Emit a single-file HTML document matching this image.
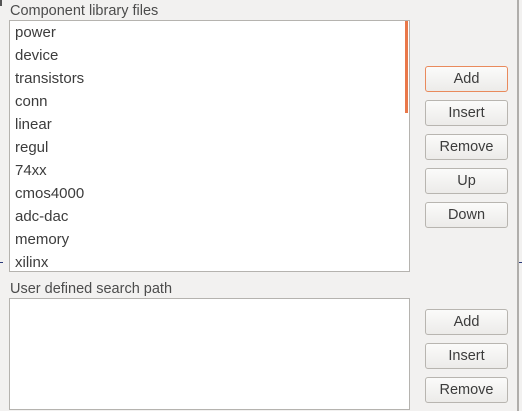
<!DOCTYPE html>
<html><head><style>
html,body{margin:0;padding:0;}
body{width:522px;height:411px;background:#f2f1f0;position:relative;overflow:hidden;font-family:"Liberation Sans",sans-serif;color:#3c3c3c;}
.lbl{position:absolute;left:10px;font-size:14.5px;color:#4c4c4c;}
.box{position:absolute;left:9px;width:399px;background:#fff;border:1px solid #b5b3af;}
.item{position:absolute;left:5px;font-size:15px;color:#3c3c3c;}
.btn{position:absolute;left:425px;width:81px;height:24px;border:1px solid #b8b5b0;border-radius:3px;background:linear-gradient(#fbfbfa,#ecebe9);font-size:14.5px;text-align:center;line-height:24px;color:#3c3c3c;}
.btn.f{border-color:#e98a5c;}
</style></head><body>
<div style="position:absolute;left:0;top:0;width:2px;height:6px;background:#555"></div>
<div style="position:absolute;left:517px;top:0;width:2px;height:411px;background:#b0aeab"></div>
<div style="position:absolute;left:0;top:262px;width:3px;height:1px;background:#2a3a7a"></div>
<div style="position:absolute;left:519px;top:262px;width:3px;height:1px;background:#2a3a7a"></div>
<div class="lbl" style="top:3px">Component library files</div>
<div class="box" style="top:20px;height:250px;">
<div style="position:absolute;right:1px;top:0;width:3px;height:92px;background:#e9784a"></div>
<div class="item" style="top:3px">power</div>
<div class="item" style="top:26px">device</div>
<div class="item" style="top:49px">transistors</div>
<div class="item" style="top:72px">conn</div>
<div class="item" style="top:95px">linear</div>
<div class="item" style="top:118px">regul</div>
<div class="item" style="top:141px">74xx</div>
<div class="item" style="top:164px">cmos4000</div>
<div class="item" style="top:187px">adc-dac</div>
<div class="item" style="top:210px">memory</div>
<div class="item" style="top:233px">xilinx</div>
</div>
<div class="btn f" style="top:66px">Add</div>
<div class="btn" style="top:100px">Insert</div>
<div class="btn" style="top:134px">Remove</div>
<div class="btn" style="top:168px">Up</div>
<div class="btn" style="top:202px">Down</div>
<div class="lbl" style="top:281px">User defined search path</div>
<div class="box" style="top:298px;height:110px;"></div>
<div class="btn" style="top:309px">Add</div>
<div class="btn" style="top:343px">Insert</div>
<div class="btn" style="top:377px">Remove</div>
</body></html>
